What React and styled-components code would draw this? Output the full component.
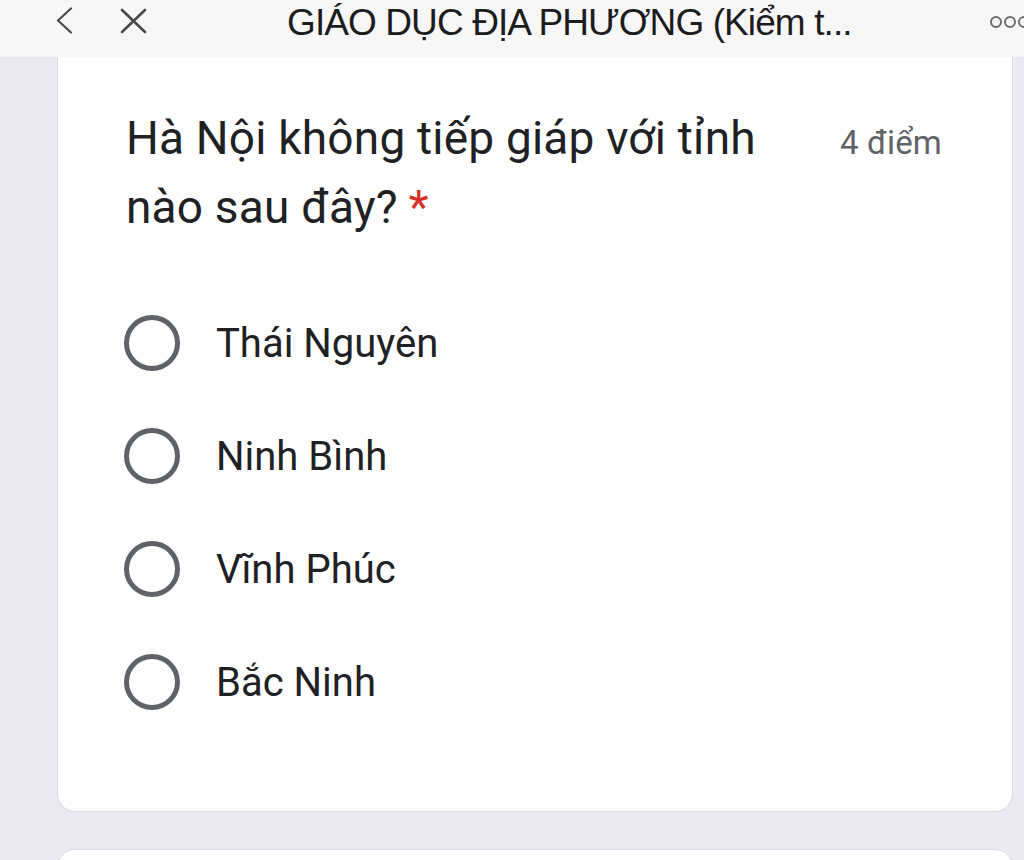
import React from "react";
import styled, { createGlobalStyle } from "styled-components";

const Global = createGlobalStyle`
  html, body { margin: 0; padding: 0; }
  body {
    background: #ece8f4;
    font-family: Roboto, "Noto Sans", sans-serif;
    width: 1024px;
    height: 860px;
    overflow: hidden;
  }
`;

const Page = styled.div`
  display: flex;
  flex-direction: column;
  width: 1024px;
  height: 860px;
`;

const TopBar = styled.header`
  height: 57px;
  background: #f7f7f8;
  display: flex;
  align-items: flex-start;
  flex-shrink: 0;
`;

const NavIcons = styled.div`
  display: flex;
  align-items: center;
  gap: 47px;
  padding: 7px 0 0 55px;
  color: #4a4a4c;
`;

const Title = styled.div`
  flex: 1;
  font-family: "Liberation Sans", Arial, sans-serif;
  font-size: 37px;
  line-height: 42px;
  color: #1c1c1e;
  letter-spacing: -0.9px;
  padding: 2px 0 0 140px;
  white-space: nowrap;
`;

const More = styled.div`
  display: flex;
  gap: 2px;
  margin-right: -6px;
  padding-top: 16px;
`;

const Dot = styled.span`
  width: 8px;
  height: 8px;
  border: 2px solid #6d6d70;
  border-radius: 50%;
`;

const Main = styled.main`
  flex: 1;
  display: flex;
  flex-direction: column;
  gap: 37px;
  padding: 0 11px 0 57px;
`;

const Card = styled.section`
  background: #fff;
  border: 1.5px solid #dcdae2;
  border-top: ${(p) => (p.$open ? "none" : "1.5px solid #dcdae2")};
  border-radius: ${(p) => (p.$open ? "0 0 18px 18px" : "18px 18px 0 0")};
  height: ${(p) => p.$h}px;
  box-sizing: border-box;
  padding: ${(p) => (p.$open ? "47px 70px 0 68px" : "0")};
`;

const QuestionRow = styled.div`
  display: flex;
  justify-content: space-between;
  align-items: baseline;
`;

const Question = styled.h2`
  margin: 0;
  font-weight: 400;
  font-size: 46px;
  line-height: 69px;
  letter-spacing: 0.2px;
  color: #202124;
  max-width: 680px;
`;

const Required = styled.span`
  color: #d93025;
  margin-left: 11px;
`;

const Points = styled.div`
  font-size: 33px;
  letter-spacing: 0.2px;
  color: #5f6368;
`;

const Options = styled.div`
  display: flex;
  flex-direction: column;
  gap: 57px;
  margin-top: 73px;
`;

const Option = styled.label`
  display: flex;
  align-items: center;
  gap: 36px;
  height: 56px;
  font-size: 40px;
  color: #202124;
`;

const Radio = styled.span`
  width: 46px;
  height: 46px;
  margin-left: -2px;
  border: 5px solid #5f6368;
  border-radius: 50%;
  flex-shrink: 0;
`;

const options = ["Thái Nguyên", "Ninh Bình", "Vĩnh Phúc", "Bắc Ninh"];

export default function App() {
  return (
    <Page>
      <Global />
      <TopBar>
        <NavIcons>
          <svg width="18" height="27" viewBox="0 0 18 27" fill="none">
            <path d="M16 1.5 L3 13.5 L16 25.5" stroke="currentColor" strokeWidth="2.2" strokeLinecap="round" strokeLinejoin="round" />
          </svg>
          <svg width="27" height="26" viewBox="0 0 27 26" fill="none">
            <path d="M2 2 L25 24 M25 2 L2 24" stroke="currentColor" strokeWidth="2.6" strokeLinecap="round" />
          </svg>
        </NavIcons>
        <Title>GIÁO DỤC ĐỊA PHƯƠNG (Kiểm t...</Title>
        <More>
          <Dot />
          <Dot />
          <Dot />
        </More>
      </TopBar>
      <Main>
        <Card $open $h={755}>
          <QuestionRow>
            <Question>
              Hà Nội không tiếp giáp với tỉnh nào sau đây?<Required>*</Required>
            </Question>
            <Points>4 điểm</Points>
          </QuestionRow>
          <Options>
            {options.map((o) => (
              <Option key={o}>
                <Radio />
                {o}
              </Option>
            ))}
          </Options>
        </Card>
        <Card $h={40} />
      </Main>
    </Page>
  );
}
